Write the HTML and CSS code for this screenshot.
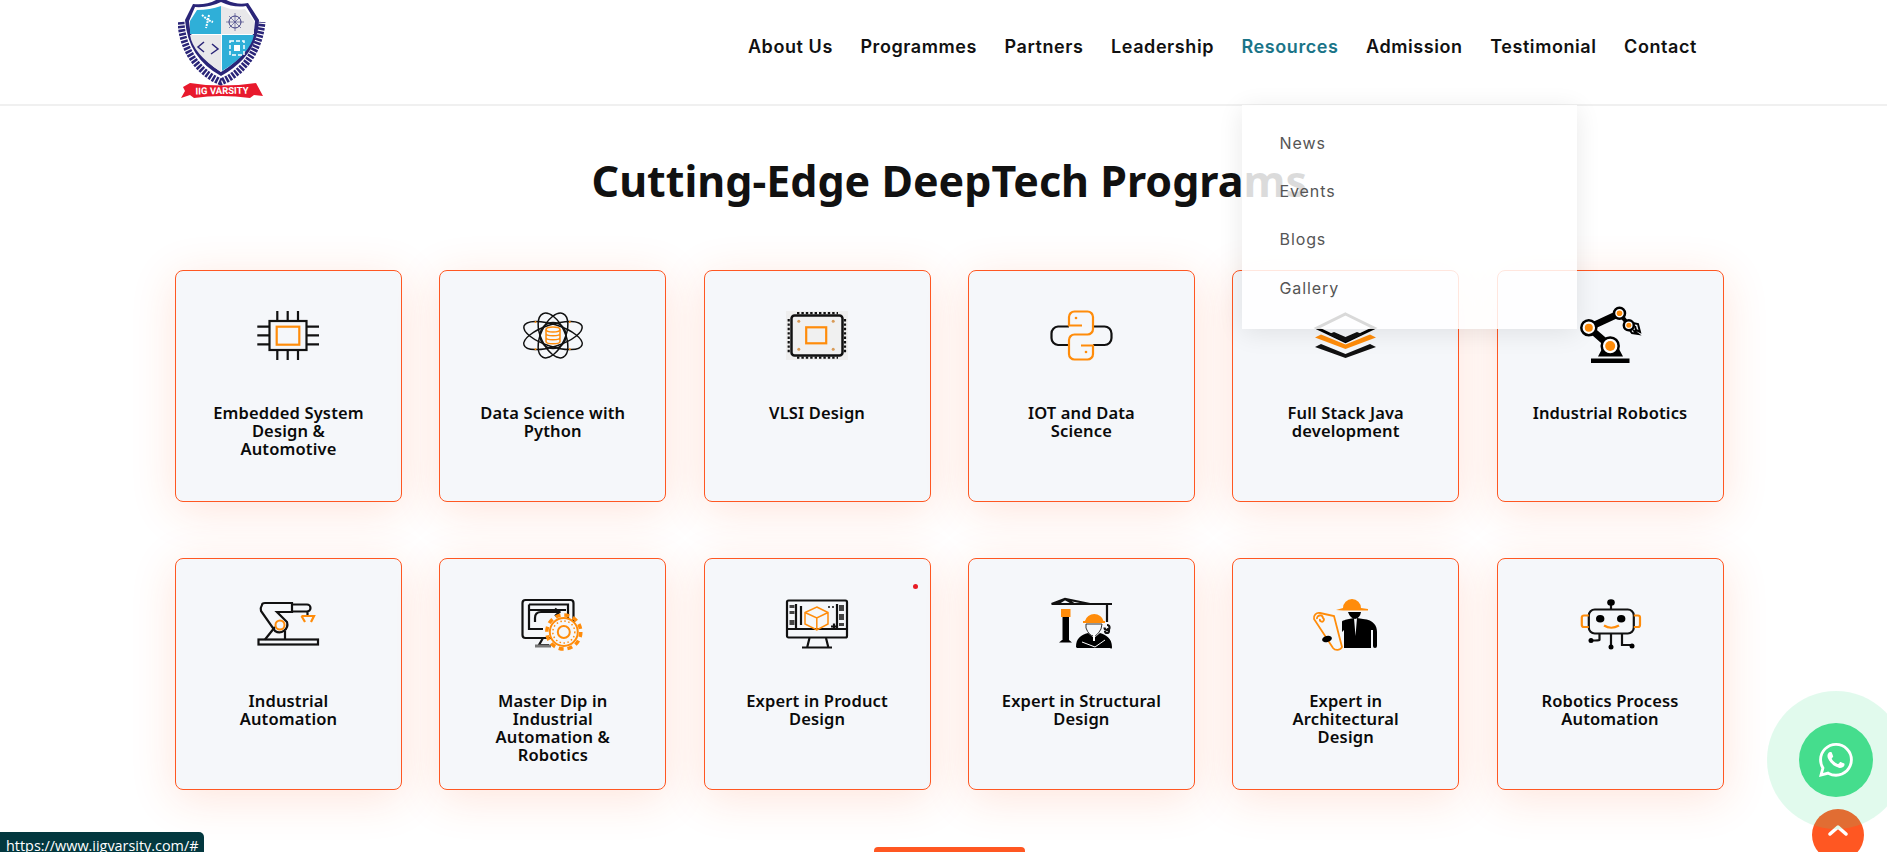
FILE: index.html
```html
<!DOCTYPE html>
<html lang="en">
<head>
<meta charset="utf-8">
<title>IIG Varsity</title>
<link rel="stylesheet" href="styles.css">
</head>
<body>
<header class="site-header">
  <a class="logo" href="#">
    <svg width="90" height="100" viewBox="0 0 90 100">
      <path class="laurel" d="M3 22 C4 46 17 71 43 82 C69 71 82 46 84 22"/>
      <path d="M15 4 Q30 6 43 -3 Q57 6 70 3 L81 20 Q80 55 43 76 Q10 58 7 20 Z" fill="#2a2578"/>
      <path d="M17 7 Q31 8 43 2 Q56 8 68 6 L77 21 Q76 52 43 72 Q13 53 11 21 Z" fill="#fff"/>
      <path d="M43 6 Q32 10 19 10 L12 21 L12 34 L43 34 Z" fill="#2fafd8"/>
      <path d="M43 6 Q55 11 67 9 L76 21 L76 34 L43 34 Z" fill="#e8e8ea"/>
      <path d="M12 35 L43 35 L43 72 Q15 54 12 35 Z" fill="#e8e8ea"/>
      <path d="M76 35 L44 35 L44 71 Q72 54 76 35 Z" fill="#2fafd8"/>
      <g fill="none" stroke-width="1.5">
        <path d="M24 15 L30 20 L28 28 M31 15 L30 20 L35 22" stroke="#fff" stroke-width="2" stroke-dasharray="2 1"/>
        <circle cx="57" cy="22" r="6" stroke="#3b3a80" stroke-width="1"/>
        <path d="M57 13V31M48 22H66M51 16L63 28M63 16L51 28" stroke="#3b3a80" stroke-width=".6"/>
        <path d="M26 42 L20 47 L26 52M34 44 L40 49 L33 54" stroke="#2a2578"/>
        <rect x="52" y="41" width="14" height="14" stroke="#fff" stroke-dasharray="4 2"/>
        <rect x="56" y="45" width="6" height="6" fill="#fff" stroke="none"/>
      </g>
      <path d="M5 87 L12 83 Q43 88 78 83 L85 96 L76 95 L72 98 Q43 94 16 98 L12 95 L3 98 L7 91 Z" fill="#e8192c"/>
      <text x="44" y="94" text-anchor="middle" class="logo-text" transform="rotate(-1 44 92)">IIG VARSITY</text>
    </svg>
  </a>
  <nav class="main-nav">
    <a href="#">About Us</a>
    <a href="#">Programmes</a>
    <a href="#">Partners</a>
    <a href="#">Leadership</a>
    <div class="nav-drop">
      <a class="active" href="#">Resources</a>
      <ul class="dropdown">
        <li>News</li>
        <li>Events</li>
        <li>Blogs</li>
        <li>Gallery</li>
      </ul>
    </div>
    <a href="#">Admission</a>
    <a href="#">Testimonial</a>
    <a href="#">Contact</a>
  </nav>
</header>

<main class="programs">
  <h2 class="programs-title">Cutting-Edge DeepTech Programs</h2>
  <div class="card-grid">

    <article class="card">
      <svg class="icon" viewBox="0 0 64 56">
        <g class="k"><rect x="13.5" y="11" width="37" height="29"/>
        <path d="M21.3 1V11M31.7 1V11M42 1V11M21.3 40V50M31.7 40V50M42 40V50M1.3 16.7H13.5M1.3 25.3H13.5M1.3 34.3H13.5M50.5 16.7H63M50.5 25.3H63M50.5 34.3H63"/></g>
        <rect class="o" x="20.7" y="16.7" width="22.6" height="18"/>
      </svg>
      <h3>Embedded System<br>Design &amp;<br>Automotive</h3>
    </article>

    <article class="card">
      <svg class="icon" viewBox="0 0 64 56">
        <g class="k thin">
          <ellipse cx="32" cy="25.5" rx="30.5" ry="11" transform="rotate(18 32 25.5)"/>
          <ellipse cx="32" cy="25.5" rx="30.5" ry="11" transform="rotate(-18 32 25.5)"/>
          <ellipse cx="32" cy="25.5" rx="24" ry="12" transform="rotate(65 32 25.5)"/>
          <ellipse cx="32" cy="25.5" rx="24" ry="12" transform="rotate(-65 32 25.5)"/>
          <circle cx="32" cy="25.5" r="13"/>
        </g>
        <g class="o thin">
          <ellipse cx="32" cy="19.5" rx="7" ry="2.5"/>
          <path d="M25 19.5V31.5C25 34.5 39 34.5 39 31.5V19.5M25 23.5C25 26.5 39 26.5 39 23.5M25 27.5C25 30.5 39 30.5 39 27.5"/>
        </g>
        <g class="of"><circle cx="14.5" cy="12" r="1"/><circle cx="48.8" cy="12" r="1"/><circle cx="14.5" cy="39.3" r="1"/><circle cx="48.8" cy="39.3" r="1"/></g>
      </svg>
      <h3>Data Science with<br>Python</h3>
    </article>

    <article class="card">
      <svg class="icon" viewBox="0 0 64 56">
        <rect x="1" y="1" width="62" height="49" fill="#eeeeee"/>
        <path class="k" stroke-width="5" stroke-dasharray="2.4 2" d="M12 3.2H53M12 47.7H53"/>
        <path class="k" stroke-width="5.5" stroke-dasharray="2.4 2" d="M3.7 9V44M60 9V44"/>
        <rect x="6.5" y="5.5" width="51" height="40" rx="3" fill="#f0f0f0" stroke="#111" stroke-width="2.5"/>
        <rect class="o" x="21.2" y="17.3" width="20" height="16"/>
        <g fill="#d99a56"><circle cx="13.8" cy="11.3" r="1.5"/><circle cx="48.2" cy="11.3" r="1.5"/><circle cx="13.8" cy="39.3" r="1.5"/><circle cx="48.2" cy="39.3" r="1.5"/></g>
      </svg>
      <h3>VLSI Design</h3>
    </article>

    <article class="card">
      <svg class="icon" viewBox="0 0 64 56">
        <path class="k" d="M20 16.5H9A7 7 0 0 0 2.5 23.5V28A7 7 0 0 0 9 35H20M44 16.5H55.5A7 7 0 0 1 62.5 23.5V28A7 7 0 0 1 55.5 35H44"/>
        <path class="o" d="M33 15.5H20V7A5.5 5.5 0 0 1 25.5 1.5H38.5A5.5 5.5 0 0 1 44 7V19A5.5 5.5 0 0 1 38.5 24.5H25.5A5.5 5.5 0 0 0 20 30V44A5.5 5.5 0 0 0 25.5 49.5H38.5A5.5 5.5 0 0 0 44 44V35.5H32"/>
        <g class="of"><circle cx="27" cy="8" r="1.3"/><circle cx="37" cy="42" r="1.3"/></g>
      </svg>
      <h3>IOT and Data<br>Science</h3>
    </article>

    <article class="card">
      <svg class="icon" viewBox="0 0 64 56">
        <path d="M31.5 4 L60 18 L31.5 31.5 L3 18 Z" fill="none" stroke="#000" stroke-width="3"/>
        <path d="M20 22 L31.5 27 L43 22 L49 24.5 L31.5 32 L14 24.5 Z" fill="#111"/>
        <path d="M1 27.5 L7 24.5 L31.5 34.5 L56 24.5 L62 27.5 L31.5 39 Z" fill="#ff8c0a"/>
        <path d="M1 37 L7 34 L31.5 44 L56 34 L62 37 L31.5 48 Z" fill="#111"/>
      </svg>
      <h3>Full Stack Java<br>development</h3>
    </article>

    <article class="card">
      <svg class="icon" viewBox="0 0 64 56">
        <rect x="13" y="48.5" width="38.5" height="4.5" fill="#000"/>
        <path d="M20 46.5 L24 39 H41 L45 46.5 Z" fill="#000"/>
        <path d="M10.8 17.7 L32 36 M10.8 17.7 L41.5 3.3" stroke="#000" stroke-width="7" fill="none"/>
        <path d="M41.5 3.3 L50.8 15.3" stroke="#000" stroke-width="4" fill="none"/>
        <path d="M50 12 L60 14 L62 22 L58 20 L57 16 M50 18 L54 23 L60 24 L55 20" fill="none" stroke="#000" stroke-width="2"/>
        <g fill="#fff" stroke="#000" stroke-width="2.5">
          <circle cx="32.2" cy="36" r="8.5"/><circle cx="10.8" cy="17.7" r="7.5"/><circle cx="41.5" cy="3.3" r="5.5"/><circle cx="50.8" cy="15.3" r="5"/>
        </g>
        <g class="of"><circle cx="32.2" cy="36" r="5"/><circle cx="10.8" cy="17.7" r="4"/><circle cx="41.5" cy="3.3" r="2.8"/><circle cx="50.8" cy="15.3" r="2.5"/></g>
      </svg>
      <h3>Industrial Robotics</h3>
    </article>

    <article class="card">
      <svg class="icon" viewBox="0 0 64 56">
        <rect class="k" x="2.5" y="41.5" width="59.5" height="5"/>
        <path class="k" d="M9 41.5 L19 29 M29 41.5 V33"/>
        <path class="k" d="M6 7 Q6 5 9 5 H36 V14 H21 L31 24 A8 8 0 0 1 19 33 L5 13 Q4 10 6 7 Z"/>
        <path class="k" d="M36 6.5 H51 A3.5 3.5 0 0 1 51 13.5 H36 M51.5 13.5 V17"/>
        <circle cx="24" cy="27" r="4.5" fill="none" stroke="#ff8c0a" stroke-width="2"/>
        <path class="o" d="M45.5 18 H58 L55 24 M49 24 L45.5 18"/>
      </svg>
      <h3>Industrial<br>Automation</h3>
    </article>

    <article class="card">
      <svg class="icon" viewBox="0 0 64 56">
        <rect class="k" x="1.5" y="2" width="51" height="38" rx="3"/>
        <path class="k" d="M8 6.5 H47 V24 M8 6.5 V31 H22 M8 12 H45 M14 24 V20 Q14 14 20 14 H38 M34 10.5 L38.5 14 L34 18 M22 40 L18 47 H28" stroke-width="1.5"/>
        <path d="M14 48 H30" stroke="#777" stroke-width="3"/>
        <circle cx="42.8" cy="34" r="14" fill="#f5f7fa" stroke="#ff8c0a" stroke-width="2"/>
        <circle cx="42.8" cy="34" r="17" fill="none" stroke="#ff8c0a" stroke-width="3.5" stroke-dasharray="5 3.9"/>
        <circle cx="42.8" cy="34" r="11" fill="none" stroke="#ff8c0a" stroke-width="1.5" stroke-dasharray="1.5 2.5"/>
        <circle cx="42.8" cy="34" r="6" fill="none" stroke="#ff8c0a" stroke-width="2"/>
      </svg>
      <h3>Master Dip in<br>Industrial<br>Automation &amp;<br>Robotics</h3>
    </article>

    <article class="card">
      <span class="dot"></span>
      <svg class="icon" viewBox="0 0 64 56">
        <rect class="k" x="2" y="2.5" width="60" height="37" rx="1.5"/>
        <path class="k" d="M2 31H62M11 6V31M52 6V31M22 50L24.5 40M41 40L43.5 50M17 49.5H47M16 8V27" stroke-width="1.8"/>
        <g fill="#444"><rect x="4.5" y="7" width="5" height="3"/><rect x="4.5" y="13" width="5" height="3"/><rect x="4.5" y="22" width="5" height="5"/><rect x="54" y="7" width="5" height="6"/><rect x="54" y="16" width="5" height="6"/><rect x="54" y="25" width="5" height="3"/><rect x="43" y="8" width="2" height="2"/><rect x="47" y="8" width="2" height="2"/></g>
        <path d="M31.8 9 L43 14.5 V26 L31.8 32 L20 26 V14.5 Z M20 14.5 L31.8 20 L43 14.5 M31.8 20 V32" fill="none" stroke="#ff8c0a" stroke-width="1.5"/>
        <path class="k" d="M46 28.5H52M49 25.5V31.5"/>
      </svg>
      <h3>Expert in Product<br>Design</h3>
    </article>

    <article class="card">
      <svg class="icon" viewBox="0 0 64 56">
        <path class="k" d="M2.5 6 H63 M2.5 6 L16 1 L41 6 M16 1 L8 6 M16 1 L25 6 M58 6 V24" stroke-width="1.5"/>
        <rect x="12" y="11" width="9.5" height="8" fill="#ff8c0a"/>
        <rect x="13.5" y="19" width="6.5" height="24" fill="#000"/>
        <path d="M10 44.5 L13 42 H20 L23 44.5 Z" fill="#000"/>
        <path class="k" d="M58 27 A2.5 2.5 0 1 1 55.5 29.5 M58 31 A2 2 0 1 1 56 33" stroke-width="1.3"/>
        <path d="M36 23 A9.5 9 0 0 1 54.5 23 H56 V25 H34 V23 Z" fill="#ff8c0a"/>
        <path d="M37 26 H53 L52 31 Q48 38 45 38 Q40 38 37 30 Z" fill="none" stroke="#333" stroke-width="1"/>
        <path d="M27 49 C27 40 32 37 39 35 L45 40 L51 35 C57 37 63 40 63 49 C63 52 61 50 61 50 H28 Z" fill="#000"/>
        <path d="M33 44 L46 49 L56 42" stroke="#fff" stroke-width="1" fill="none"/>
        <path d="M44 36 H46 V43 H44 Z" fill="#fff"/>
      </svg>
      <h3>Expert in Structural<br>Design</h3>
    </article>

    <article class="card">
      <svg class="icon" viewBox="0 0 64 56">
        <path d="M29 10 A9 9 0 0 1 47 10 L54 11 V12.5 H29 L22 12 Z" fill="#ff8c0a"/>
        <path d="M34 14 H47 Q46 20 41 21 Q36 20 34 14 Z" fill="#000"/>
        <path d="M35 21 L40 20 L41.5 38 L43 20 L49 21 C60 22 63 28 63 34 V48 A2 2 0 0 1 59 48 V32 H57 V50 H30 V32 L28 34 V24 C28 22 32 22 35 21 Z" fill="#000"/>
        <path d="M0 21 A5 5 0 0 1 6 15 L20 18 L28 49 A5 4 0 0 1 19 50 Z M3 21 A3 3 0 1 1 9 20 A2 2 0 1 1 6 21" fill="#f5f7fa" stroke="#ff8c0a" stroke-width="1.8"/>
        <ellipse cx="13" cy="41" rx="5" ry="3" fill="#000" transform="rotate(-15 13 41)"/>
      </svg>
      <h3>Expert in<br>Architectural<br>Design</h3>
    </article>

    <article class="card">
      <svg class="icon" viewBox="0 0 64 56">
        <path class="k" d="M33 6 V11.5 M21.5 36 V42 Q21.5 42.5 17 42.5 H13 M33 36 V49 M44 36 V47 H53" stroke-width="2"/>
        <g fill="#000"><ellipse cx="33" cy="4.5" rx="3.8" ry="3.2"/><circle cx="13" cy="42.5" r="2.5"/><circle cx="33" cy="49" r="2.5"/><circle cx="54" cy="48" r="2.5"/><ellipse cx="22.2" cy="20.7" rx="4.2" ry="3.8"/><ellipse cx="43.2" cy="20.7" rx="4.2" ry="3.8"/></g>
        <rect class="k" x="10.8" y="11.5" width="45" height="24" rx="6" stroke-width="1.8"/>
        <path class="o" stroke-width="1.8" d="M10.8 17.5 H6 Q3.8 17.5 3.8 19.5 V27 Q3.8 29 6 29 H10.8 M55.8 17.5 H60 Q62 17.5 62 19.5 V27 Q62 29 60 29 H55.8 M26 27.5 Q33 32 41 27.5"/>
      </svg>
      <h3>Robotics Process<br>Automation</h3>
    </article>
  </div>
  <a class="more-btn" href="#"></a>
</main>

<a class="scroll-top" href="#">
  <svg width="20" height="12" viewBox="0 0 20 12"><path d="M2 10L10 3L18 10" fill="none" stroke="#fff" stroke-width="3.5" stroke-linecap="round" stroke-linejoin="round"/></svg>
</a>
<a class="whatsapp" href="#">
  <span class="whatsapp-inner">
    <svg width="34" height="34" viewBox="0 0 16 16" fill="#fff"><path d="M13.601 2.326A7.854 7.854 0 0 0 7.994 0C3.627 0 .068 3.558.064 7.926c0 1.399.366 2.76 1.057 3.965L0 16l4.204-1.102a7.933 7.933 0 0 0 3.79.965h.004c4.368 0 7.926-3.558 7.93-7.93A7.898 7.898 0 0 0 13.6 2.326zM7.994 14.521a6.573 6.573 0 0 1-3.356-.92l-.24-.144-2.494.654.666-2.433-.156-.251a6.56 6.56 0 0 1-1.007-3.505c0-3.626 2.957-6.584 6.591-6.584a6.56 6.56 0 0 1 4.66 1.931 6.557 6.557 0 0 1 1.928 4.66c-.004 3.639-2.961 6.592-6.592 6.592zm3.615-4.934c-.197-.099-1.17-.578-1.353-.646-.182-.065-.315-.099-.445.099-.133.197-.513.646-.627.775-.114.133-.232.148-.43.05-.197-.1-.836-.308-1.592-.985-.59-.525-.985-1.175-1.103-1.372-.114-.198-.011-.304.088-.403.087-.088.197-.232.296-.346.1-.114.133-.198.198-.33.065-.134.034-.248-.015-.347-.05-.099-.445-1.076-.612-1.47-.16-.389-.323-.335-.445-.34-.114-.007-.247-.007-.38-.007a.729.729 0 0 0-.529.247c-.182.198-.691.677-.691 1.654 0 .977.71 1.916.81 2.049.098.133 1.394 2.132 3.383 2.992.47.205.84.326 1.129.418.475.152.904.129 1.246.08.38-.058 1.171-.48 1.338-.943.164-.464.164-.86.114-.943-.049-.084-.182-.133-.38-.232z"/></svg>
  </span>
</a>
<div class="status-link">https://www.iigvarsity.com/#</div>
</body>
</html>
```
FILE: styles.css
```css
* { box-sizing: border-box; }
html, body { margin: 0; padding: 0; height: 852px; overflow: hidden; background: #fff; }
body { font-family: "Noto Sans", sans-serif; color: #111; }
a { text-decoration: none; color: inherit; }

.site-header {
  height: 106px;
  display: flex;
  align-items: flex-start;
  padding: 0 190px 0 178px;
  border-bottom: 2px solid #f0f0f0;
  background: #fff;
  position: relative;
  z-index: 5;
}
.logo { display: block; height: 100px; }
.logo svg { display: block; }
.logo-text { font: 700 9.5px "Roboto", sans-serif; fill: #fff; }
.laurel { fill: none; stroke: #2a2578; stroke-width: 7; stroke-dasharray: 2.5 1.2; }

.main-nav {
  margin-left: auto;
  display: flex;
  align-items: center;
  gap: 27.5px;
  height: 93px;
  font: 600 18px/1 "Inter", sans-serif;
  letter-spacing: .58px;
  color: #111;
}
.nav-drop { position: relative; }
.main-nav .active { color: #1a7488; }
.dropdown {
  position: absolute;
  top: 67px;
  left: 0;
  width: 335px;
  height: 224px;
  margin: 0;
  padding: 14px 38px 0;
  list-style: none;
  background: rgba(255, 255, 255, .85);
  box-shadow: 0 4px 24px rgba(0, 0, 0, .09);
  font: 400 16px/48.4px "Inter", sans-serif;
  letter-spacing: .9px;
  color: #555;
}

.programs { padding: 0 163.5px 0 175px; }
.programs-title {
  margin: 42px 0 56px;
  text-align: center;
  font: 700 43px/66px "Noto Sans", sans-serif;
  color: #111;
}
.card-grid {
  display: grid;
  grid-template-columns: repeat(6, 1fr);
  column-gap: 37.4px;
  row-gap: 56px;
}
.card {
  position: relative;
  height: 232px;
  padding: 39px 10px 0;
  border: 1px solid #ff5722;
  border-radius: 8px;
  background: #f5f7fa;
  box-shadow: 0 8px 45px rgba(255, 87, 34, .16);
  text-align: center;
}
.icon { display: block; width: 64px; height: 56px; margin: 0 auto; overflow: visible; }
.card h3 {
  margin: 38px 0 0;
  font: 600 16.5px/18px "Noto Sans", sans-serif;
  letter-spacing: .15px;
  color: #0a0a0a;
}
.k { fill: none; stroke: #111; stroke-width: 2.2; }
.o { fill: none; stroke: #ff8c0a; stroke-width: 2.2; }
.thin { stroke-width: 1.5; }
.of { fill: #ff8c0a; }
.dot {
  position: absolute;
  top: 25px;
  right: 12px;
  width: 5px;
  height: 5px;
  border-radius: 50%;
  background: #e81c24;
}

.more-btn {
  display: block;
  width: 151px;
  height: 44px;
  margin: 57px auto 0;
  border-radius: 4px;
  background: #ff5722;
}

.scroll-top {
  position: fixed;
  left: 1812px;
  top: 809px;
  width: 52px;
  height: 52px;
  padding-top: 15px;
  border-radius: 50%;
  background: #ff5722;
  display: flex;
  justify-content: center;
  align-items: flex-start;
}
.whatsapp {
  position: fixed;
  left: 1767px;
  top: 691px;
  width: 138px;
  height: 138px;
  border-radius: 50%;
  background: rgba(69, 221, 141, .16);
  display: flex;
  align-items: center;
  justify-content: center;
}
.whatsapp-inner {
  width: 74px;
  height: 74px;
  border-radius: 50%;
  background: #45dd8d;
  display: flex;
  align-items: center;
  justify-content: center;
}
.status-link {
  position: fixed;
  left: 0;
  top: 832px;
  width: 204px;
  height: 30px;
  padding: 4px 0 0 6px;
  border-radius: 0 5px 0 0;
  background: #03383f;
  color: #fff;
  font: 400 14.4px/20px "Open Sans", sans-serif;
  white-space: nowrap;
}
```
